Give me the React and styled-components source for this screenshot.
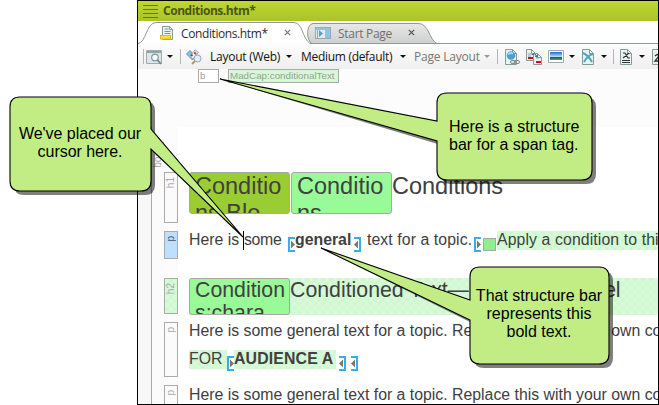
import React from "react";
import styled, { createGlobalStyle } from "styled-components";

const Global = createGlobalStyle`
  * { box-sizing: border-box; }
  body { margin: 0; background: #fff; overflow: hidden; }
`;

const Stage = styled.div`
  position: relative;
  width: 659px;
  height: 405px;
  overflow: hidden;
  padding-left: 137px;
  font-family: "Liberation Sans", Arial, sans-serif;
`;

const Window = styled.main`
  width: 522px;
  height: 405px;
  border: 1px solid #000;
  display: flex;
  flex-direction: column;
  overflow: hidden;
  background: #fcfcfc;
`;

const TitleBar = styled.header`
  flex: none;
  height: 20px;
  display: flex;
  align-items: center;
  gap: 4px;
  padding-left: 5px;
  background: linear-gradient(#bfd730, #abc327);
  color: #4a5613;
  font: bold 12px/20px "Open Sans", "Noto Sans", sans-serif;
  letter-spacing: -0.45px;
`;

const Tabs = styled.nav`
  flex: none;
  height: 23px;
  display: flex;
  background: #fff;
  border-bottom: 1px solid #929892;
`;

const Tab = styled.div`
  position: relative;
  width: ${(p) => p.$width}px;
  height: 23px;
  margin-left: ${(p) => (p.$active ? 0 : -8)}px;
  padding-left: ${(p) => (p.$active ? 22 : 10)}px;
  display: flex;
  align-items: center;
  z-index: ${(p) => (p.$active ? 2 : 1)};
  color: ${(p) => (p.$active ? "#2b2b2b" : "#6e6e6e")};
  font: 12px/23px "Open Sans", "Noto Sans", sans-serif;
`;

const TabShape = styled.svg`
  position: absolute;
  left: 0;
  top: 0;
  z-index: -1;
`;

const TabLabel = styled.span`
  flex: none;
  width: ${(p) => p.$width}px;
  margin-left: ${(p) => p.$gap}px;
  padding-top: 2px;
  white-space: nowrap;
  letter-spacing: ${(p) => p.$spacing}px;
`;

const Toolbar = styled.div`
  flex: none;
  height: 25px;
  display: flex;
  align-items: center;
  background: linear-gradient(#fdfdfd, #efefef);
  font: 12px/24px "Open Sans", "Noto Sans", sans-serif;
  color: #111;
`;

const Slot = styled.span`
  flex: none;
  display: flex;
  align-items: center;
  width: ${(p) => p.$width}px;
  height: 24px;
  white-space: nowrap;
  color: ${(p) => (p.$muted ? "#777" : "#111")};
  letter-spacing: ${(p) => p.$spacing || 0}px;
`;

const Separator = styled.i`
  width: 1px;
  height: 15px;
  background: #b5b5b5;
`;

const Caret = styled.i`
  border: 3px solid transparent;
  border-top-color: ${(p) => (p.$muted ? "#999" : "#111")};
  border-bottom: 0;
`;

const SpanBars = styled.div`
  flex: none;
  height: 58px;
  display: flex;
  align-items: flex-start;
  gap: 9px;
  padding-left: 60px;
`;

const SpanBar = styled.span`
  width: ${(p) => p.$width}px;
  height: 14px;
  border: 1px solid #aaa;
  padding-left: 1px;
  background: ${(p) => (p.$green ? "#d5f9d5" : "#fff")};
  color: #9c9c9c;
  font-size: 9.8px;
  line-height: 12px;
  white-space: nowrap;
`;

const Editor = styled.div`
  flex: 1;
  min-height: 0;
  display: flex;
`;

const OuterBar = styled.div`
  width: 14px;
  margin-top: ${(p) => p.$top}px;
  margin-right: -1px;
  border: solid #aaa;
  border-width: ${(p) => (p.$top ? "1px 1px 0 1px" : "0 1px 0 0")};
  background: ${(p) => (p.$top ? "#fbfbfb" : "#f7f7f7")};
  padding-top: 3px;
`;

const Bars = styled.div`
  width: 14px;
  padding-top: 45px;
  display: flex;
  flex-direction: column;
  background: #fcfcfc;
`;

const checker = (a, b) => `repeating-conic-gradient(${a} 0 25%, ${b} 0 50%) 0 0 / 8px 8px`;
const conditionFill = checker("#d0f8d0", "#d9fad9");

const Bar = styled.div`
  flex: none;
  width: 14px;
  height: ${(p) => p.$height}px;
  margin-bottom: ${(p) => p.$gap || 8}px;
  border: 1px solid #aaa;
  padding-top: 4px;
  background: ${(p) => p.$fill || "#fbfbfb"};
`;

const BarName = styled.span`
  display: block;
  width: 11px;
  writing-mode: vertical-rl;
  transform: rotate(180deg);
  color: ${(p) => (p.$dark ? "#4d5561" : "#aaa")};
  font-size: 10px;
  line-height: 11px;
`;

const Doc = styled.article`
  flex: 1;
  min-width: 0;
  padding: 45px 0 0 11px;
  overflow: hidden;
  background: #fff;
  color: #404040;
`;

const Line = styled.div`
  display: flex;
  align-items: flex-start;
  height: ${(p) => p.$height}px;
  margin-bottom: ${(p) => p.$gap || 0}px;
  font-size: ${(p) => p.$size || 15.83}px;
  line-height: ${(p) => p.$leading || 18}px;
  white-space: pre;
  background: ${(p) => (p.$marked ? conditionFill : "none")};
`;

const Run = styled.span`
  flex: none;
  width: ${(p) => (p.$width ? p.$width + "px" : "auto")};
  padding-top: ${(p) => p.$drop || 0}px;
  padding-bottom: 1px;
  font-weight: ${(p) => (p.$bold ? 700 : 400)};
  letter-spacing: ${(p) => p.$spacing || 0}px;
  background: ${(p) => (p.$marked ? conditionFill : "none")};
`;

const Variable = styled.span`
  flex: none;
  width: 101px;
  height: ${(p) => p.$height}px;
  margin-right: ${(p) => p.$gap || 0}px;
  padding-left: 5px;
  border: 1px solid #a5a9a5;
  border-radius: 3px;
  background: ${(p) => p.$fill};
  overflow: hidden;
`;

const TextCursor = styled.i`
  flex: none;
  width: 1px;
  height: 19px;
  background: #000;
`;

const Square = styled.i`
  flex: none;
  width: 13px;
  height: 13px;
  margin: 7px 1px 0 2px;
  border: 1px solid #a5a9a5;
  background: #90ee90;
`;

const MarkSvg = styled.svg`
  flex: none;
  margin-top: 6px;
  margin-left: ${(p) => p.$left || 0}px;
  margin-right: ${(p) => p.$right || 0}px;
`;

const Mark = ({ close, left, right }) => (
  <MarkSvg width="7" height="15" $left={left} $right={right}>
    <g transform={close ? "translate(7 0) scale(-1 1)" : undefined}>
      <path d="M7 1H1V14H7" fill="none" stroke="#35aeea" strokeWidth="2" />
      <path d="M3 3.500L7 7.500L3 11.500Z" fill="#777" />
    </g>
  </MarkSvg>
);

const Overlay = styled.svg`
  position: absolute;
  left: 0;
  top: 0;
  z-index: 5;
`;

const CalloutText = styled.p`
  position: absolute;
  z-index: 6;
  left: ${(p) => p.$x}px;
  top: ${(p) => p.$y}px;
  width: ${(p) => p.$width}px;
  margin: 0;
  color: #000;
  font-size: 16px;
  line-height: 18.2px;
  text-align: ${(p) => p.$align || "center"};
  letter-spacing: ${(p) => p.$spacing}px;
  white-space: nowrap;
`;

const Icon = ({ children, w = 16 }) => (
  <svg width={w} height="16" viewBox={`0 0 ${w} 16`}>{children}</svg>
);

const Page = ({ x = 0, y = 0, w = 11, h = 15 }) => (
  <path
    d={`M${x + 0.5} ${y + 0.5}h${w - 4}l4 4v${h - 4}h-${w}zM${x + w - 3.5} ${y + 0.5}v4h4`}
    fill="#e8f3f0"
    stroke="#849c99"
  />
);

const Close = ({ color }) => (
  <svg width="7" height="7"><path d="M.8.8L6.2 6.2M6.2.8L.8 6.2" stroke={color} strokeWidth="1.2" /></svg>
);

const callouts = [
  {
    shape: "M20 97H141Q151 97 151 107V129L243 237L151 149V181Q151 191 141 191H20Q10 191 10 181V107Q10 97 20 97Z",
    shadow: "M24 101H145Q155 101 155 111V133L243 237L155 153V185Q155 195 145 195H24Q14 195 14 185V111Q14 101 24 101Z",
  },
  {
    shape: "M447 93H582Q592 93 592 103V170Q592 180 582 180H447Q437 180 437 170V141L220 79L437 121V103Q437 93 447 93Z",
    shadow: "M451 97H586Q596 97 596 107V174Q596 184 586 184H451Q441 184 441 174V145L220 79L441 125V107Q441 97 451 97Z",
  },
  {
    shape: "M480 267H599Q609 267 609 277V354Q609 364 599 364H480Q470 364 470 354V320L321 248L470 300V277Q470 267 480 267Z",
    shadow: "M484 271H603Q613 271 613 281V358Q613 368 603 368H484Q474 368 474 358V324L321 248L474 304V281Q474 271 484 271Z",
  },
];

export default function App() {
  return (
    <Stage>
      <Global />
      <Window>
        <TitleBar>
          <svg width="16" height="18"><path d="M0 3.500H15M0 7.500H15M0 11.500H15M0 15.500H15" stroke="#66761c" strokeWidth="1.200" /></svg>
          <span>Conditions.htm*</span>
        </TitleBar>
        <Tabs>
          <Tab $active $width={175}>
            <TabShape width="175" height="23">
              <path d="M0 22.500C8 22 8 2 18 1.500H156C165 2 164 17 172 22.500V23H0Z" fill="#fff" />
              <path d="M0 22.500C8 22 8 2 18 1.500H156C165 2 164 17 172 22.500" fill="none" stroke="#929892" />
            </TabShape>
            <Icon w={14}>
              <path d="M2.500 1.500h7l3 3v10h-10zM9.500 1.500v3h3" fill="#edf5f1" stroke="#849c99" />
              <path d="M4.500 4h4M4.500 6.500h6M4.500 8.500h6" stroke="#7594a0" />
              <rect x=".5" y="10.500" width="10" height="3.500" fill="#ffdc45" stroke="#e9b51f" />
            </Icon>
            <TabLabel $width={103} $gap={7} $spacing={-0.4}>Conditions.htm*</TabLabel>
            <Close color="#777" />
          </Tab>
          <Tab $width={133}>
            <TabShape width="133" height="23">
              <defs>
                <linearGradient id="idle" x2="0" y2="1"><stop stopColor="#e8e8e8" /><stop offset="1" stopColor="#cfcfcf" /></linearGradient>
              </defs>
              <path d="M7 22.500C1 20 1 3 8 2.500H113C124 2 124 19 132 22.500Z" fill="url(#idle)" stroke="#929892" />
            </TabShape>
            <svg width="16" height="14" opacity=".75">
              <rect x=".5" y="1.500" width="15" height="11" fill="#e4f1f6" stroke="#7f99a7" />
              <path d="M1 3H15" stroke="#7eb7db" strokeWidth="2" />
              <path d="M10 4H15V12H10Z" fill="#77bde5" /><path d="M4 4L8 7.500L4 11Z" fill="#2f87bf" />
              <path d="M2.500 4V12" stroke="#65a5cc" />
            </svg>
            <TabLabel $width={70} $gap={7} $spacing={-0.3}>Start Page</TabLabel>
            <Close color="#555" />
          </Tab>
        </Tabs>
        <Toolbar>
          <Slot $width={5} />
          <Slot $width={3}><Separator /></Slot>
          <Slot $width={21}>
            <Icon>
              <path d="M.5 1.500H15.500V14.500H.5Z" fill="#dfe8e8" stroke="#9baeac" />
              <path d="M1 3H15" stroke="#8fa5a3" strokeWidth="2" />
              <circle cx="9" cy="8.500" r="3.300" fill="#f2fbff" stroke="#7e98a3" strokeWidth="1.200" /><path d="M11.500 11L15 15" stroke="#74858b" strokeWidth="1.800" />
            </Icon>
          </Slot>
          <Slot $width={13}><Caret /></Slot>
          <Slot $width={6}><Separator /></Slot>
          <Slot $width={24}>
            <Icon>
              <path d="M.5 5L4 1.500L9.500 8L6.500 11Z" fill="#7fc3e2" stroke="#5c9cb8" />
              <path d="M9 .8L12.500 3.500L7 10L4 7.500Z" fill="#edf6fa" stroke="#93a9b1" />
              <path d="M8.200 3.500L10.200 5M5 5.500L6.500 7" stroke="#da2638" strokeWidth="1.800" />
              <circle cx="11.500" cy="9.500" r="3.500" fill="#e4eff5" stroke="#8fa8b5" /><path d="M9 12L6 15" stroke="#c08a5c" strokeWidth="1.800" />
            </Icon>
          </Slot>
          <Slot $width={76} $spacing={-0.25}>Layout (Web)</Slot>
          <Slot $width={15}><Caret /></Slot>
          <Slot $width={99} $spacing={-0.3}>Medium (default)</Slot>
          <Slot $width={14}><Caret /></Slot>
          <Slot $width={70} $muted $spacing={-0.2}>Page Layout</Slot>
          <Slot $width={13}><Caret $muted /></Slot>
          <Slot $width={8}><Separator /></Slot>
          <Slot $width={21}>
            <Icon>
              <Page />
              <circle cx="6" cy="6.500" r="4.300" fill="#4a9fdb" /><path d="M3 5.500Q5 3 8 4.500" fill="none" stroke="#a5dcf7" strokeWidth="2" />
              <rect x="5.500" y="11.500" width="5" height="3" rx="1.500" fill="#ddd" stroke="#888" /><rect x="9.500" y="11.500" width="5" height="3" rx="1.500" fill="none" stroke="#888" />
            </Icon>
          </Slot>
          <Slot $width={22}>
            <Icon>
              <Page w={9} h={11} /><Page x={7} y={4} w={8} h={11} />
              <path d="M2 5H6M2 7H5M10 9H13" stroke="#8aa1a7" />
              <path d="M2 9H7M10 13H15" stroke="#d60a18" strokeWidth="2" /><path d="M6 6Q9 3 11 8M9 7L11 8L12 6" fill="none" stroke="#3154bb" />
            </Icon>
          </Slot>
          <Slot $width={21}>
            <svg width="16" height="13"><defs><linearGradient id="sky" x2="0" y2="1"><stop stopColor="#1f68c8" /><stop offset=".6" stopColor="#b8e7f7" /><stop offset=".65" stopColor="#28563d" /><stop offset="1" stopColor="#4f9e87" /></linearGradient></defs><path d="M.5.5H15.500V12.500H.5Z" fill="#fff" stroke="#9aaab3" /><path d="M2 2H14V10H2Z" fill="url(#sky)" /></svg>
          </Slot>
          <Slot $width={13}><Caret /></Slot>
          <Slot $width={19}>
            <Icon w={13}><Page /><path d="M1 4Q6 6 10 13M11 5Q6 6 2 13" fill="none" stroke="#4ca5bd" strokeWidth="2" /></Icon>
          </Slot>
          <Slot $width={12}><Caret /></Slot>
          <Slot $width={7}><Separator /></Slot>
          <Slot $width={19}>
            <Icon w={13}><Page /><path d="M3 4H5L8 9H10M9 4L3 9M2 11.500H10M2 13.500H10" fill="none" stroke="#333" strokeWidth="1.200" /></Icon>
          </Slot>
          <Slot $width={13}><Caret /></Slot>
          <Slot $width={13}>
            <Icon w={13}><Page /><path d="M3 7Q6 4 7 7L3 12H8" fill="none" stroke="#333" strokeWidth="1.400" /></Icon>
          </Slot>
        </Toolbar>
        <SpanBars>
          <SpanBar $width={21}>b</SpanBar>
          <SpanBar $width={111} $green>MadCap:conditionalText</SpanBar>
        </SpanBars>
        <Editor>
          <OuterBar $top={0} />
          <OuterBar $top={15}><BarName>body</BarName></OuterBar>
          <Bars>
            <Bar $height={51}><BarName>h1</BarName></Bar>
            <Bar $height={28} $gap={19} $fill="#bfdfff"><BarName $dark>p</BarName></Bar>
            <Bar $height={36} $fill={conditionFill}><BarName>h2</BarName></Bar>
            <Bar $height={55}><BarName>p</BarName></Bar>
            <Bar $height={55}><BarName>p</BarName></Bar>
          </Bars>
          <Doc>
            <Line $height={42} $gap={17} $size={23.5} $leading={27}>
              <Variable $height={42} $gap={1} $fill="#9acd32">Conditio<br />ns.Blo</Variable>
              <Variable $height={42} $fill="#98fb98">Conditio<br />ns.</Variable>
              <Run $drop={1}>Conditions</Run>
            </Line>
            <Line $height={30} $gap={17}>
              <Run $width={54}>Here is </Run>
              <TextCursor />
              <Run $width={44} $spacing={-0.3}>some</Run>
              <Mark />
              <Run $bold $width={59}>general</Run>
              <Mark close right={6} />
              <Run $width={107} $spacing={0.08}>text for a topic.</Run>
              <Mark />
              <Square />
              <Run $marked $spacing={0.1}>Apply a condition to this</Run>
            </Line>
            <Line $height={37} $gap={7} $size={21.3} $leading={23} $marked>
              <Variable $height={37} $fill="#98fb98">Condition<br />s:chara</Variable>
              <Run $drop={1}>Conditioned </Run>
              <Run $drop={1} $spacing={-0.3}>Text—Paragraph Level</Run>
            </Line>
            <Line $height={28}>
              <Run>Here is some general text for a topic. Replace this with your own content.</Run>
            </Line>
            <Line $height={35}>
              <Run $marked $width={38}>FOR </Run>
              <Mark />
              <Run $bold $marked $width={102} $spacing={0.15}>AUDIENCE A</Run>
              <Mark close left={3} right={5} />
              <Mark close />
            </Line>
            <Line $height={20} $leading={19}>
              <Run>Here is some general text for a topic. Replace this with your own content.</Run>
            </Line>
          </Doc>
        </Editor>
      </Window>
      <Overlay width="659" height="405">
        {callouts.map((c) => (
          <g key={c.shape}>
            <path d={c.shadow} fill="#000" fillOpacity=".5" />
            <path d={c.shape} fill="#c2ed84" stroke="#000" strokeWidth="1.100" />
          </g>
        ))}
      </Overlay>
      <CalloutText $x={12} $y={125} $width={136} $spacing={-0.05}>We've placed our<br />cursor here.</CalloutText>
      <CalloutText $x={449} $y={118} $width={136} $align="left" $spacing={-0.02}>Here is a structure<br />bar for a span tag.</CalloutText>
      <CalloutText $x={470} $y={287} $width={138} $spacing={0}>That structure bar<br />represents this<br />bold text.</CalloutText>
    </Stage>
  );
}
